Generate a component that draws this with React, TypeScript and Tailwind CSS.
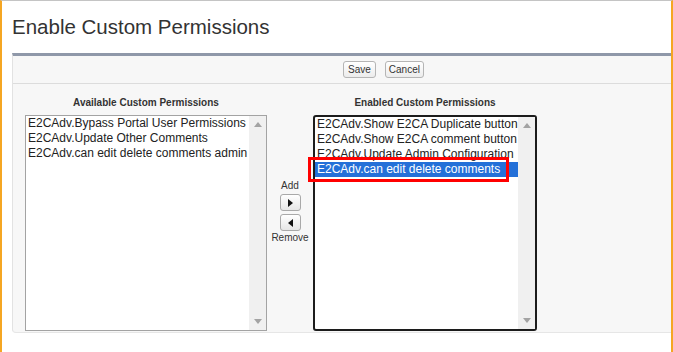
import React from 'react';

const available = [
  'E2CAdv.Bypass Portal User Permissions',
  'E2CAdv.Update Other Comments',
  'E2CAdv.can edit delete comments admin',
];

const enabled = [
  'E2CAdv.Show E2CA Duplicate button',
  'E2CAdv.Show E2CA comment button',
  'E2CAdv.Update Admin Configuration',
  'E2CAdv.can edit delete comments',
];

const ScrollTrack: React.FC = () => (
  <div className="w-[17px] shrink-0 bg-[#f0f0f0] flex flex-col justify-between items-center py-[6px]">
    <svg width="8" height="5" viewBox="0 0 8 5">
      <path d="M4 0 L8 5 L0 5 Z" fill="#a3a3a3" />
    </svg>
    <svg width="8" height="5" viewBox="0 0 8 5">
      <path d="M0 0 L8 0 L4 5 Z" fill="#a3a3a3" />
    </svg>
  </div>
);

const Arrow: React.FC<{ dir: 'left' | 'right' }> = ({ dir }) => (
  <button className="w-[21px] h-[17px] rounded-[3px] border border-[#a9a9a9] bg-gradient-to-b from-white to-[#e6e6e6] flex items-center justify-center">
    <svg width="5" height="8" viewBox="0 0 5 8">
      {dir === 'right' ? <path d="M0 0 L5 4 L0 8 Z" fill="#111" /> : <path d="M5 0 L0 4 L5 8 Z" fill="#111" />}
    </svg>
  </button>
);

export default function App() {
  return (
    <div className="w-[673px] h-[352px] bg-white border-l-2 border-r-2 border-t border-l-[#f5a623] border-r-[#f5a623] border-t-[#c4c4c4] overflow-hidden font-['Liberation_Sans',Arial,sans-serif]">
      <h1 className="pl-[10px] pt-[14px] text-[20.5px] leading-[24px] text-[#333] font-normal">Enable Custom Permissions</h1>

      <div className="mt-[14px] ml-[10px] h-[280px] bg-[#f7f7f7] border-t-[3px] border-t-[#8f98a9] border-l border-b border-l-[#e2e2e2] border-b-[#e6e6e6] rounded-bl-[4px]">
        <div className="h-[28px] border-b border-[#dcdcdc] flex gap-[9px] pl-[330px] pt-[5px]">
          <button className="h-[17px] px-[4px] rounded-[3px] border border-[#b5b5b5] bg-gradient-to-b from-white to-[#ececec] text-[10px] leading-[15px] text-[#333]">Save</button>
          <button className="h-[17px] px-[3px] rounded-[3px] border border-[#b5b5b5] bg-gradient-to-b from-white to-[#ececec] text-[10px] leading-[15px] text-[#333]">Cancel</button>
        </div>

        <div className="flex items-start pl-[12px] pt-[13px]">
          <div className="w-[242px]">
            <div className="h-[12px] mb-[6px] text-center text-[10px] leading-[12px] font-bold text-[#333]">Available Custom Permissions</div>
            <div className="h-[216px] flex bg-white border border-[#a3a3a3]">
              <div className="flex-1 text-[12px] leading-[15px] text-[#222] pl-[2px] whitespace-nowrap overflow-hidden">
                {available.map((a) => (
                  <div key={a}>{a}</div>
                ))}
              </div>
              <ScrollTrack />
            </div>
          </div>

          <div className="w-[46px] flex flex-col items-center pt-[83px] text-[10px] leading-[12px] text-[#333]">
            <div>Add</div>
            <div className="mt-[2px]"><Arrow dir="right" /></div>
            <div className="mt-[3px]"><Arrow dir="left" /></div>
            <div className="mt-[1px]">Remove</div>
          </div>

          <div className="w-[224px]">
            <div className="h-[12px] mb-[6px] text-center text-[10px] leading-[12px] font-bold text-[#333]">Enabled Custom Permissions</div>
            <div className="relative h-[216px] flex bg-white border-2 border-[#1c1c1c] rounded-[3px]">
              <div className="flex-1 text-[12px] leading-[15px] text-[#222] whitespace-nowrap overflow-hidden">
                {enabled.map((e, i) => (
                  <div key={e} className={i === 3 ? 'pl-[2px] bg-[#2470d8] text-white' : 'pl-[2px]'}>{e}</div>
                ))}
              </div>
              <ScrollTrack />
              <div className="absolute left-[-7px] top-[40px] w-[201px] h-[25px] border-[3px] border-[#ff0000]" />
            </div>
          </div>
        </div>
      </div>
    </div>
  );
}
